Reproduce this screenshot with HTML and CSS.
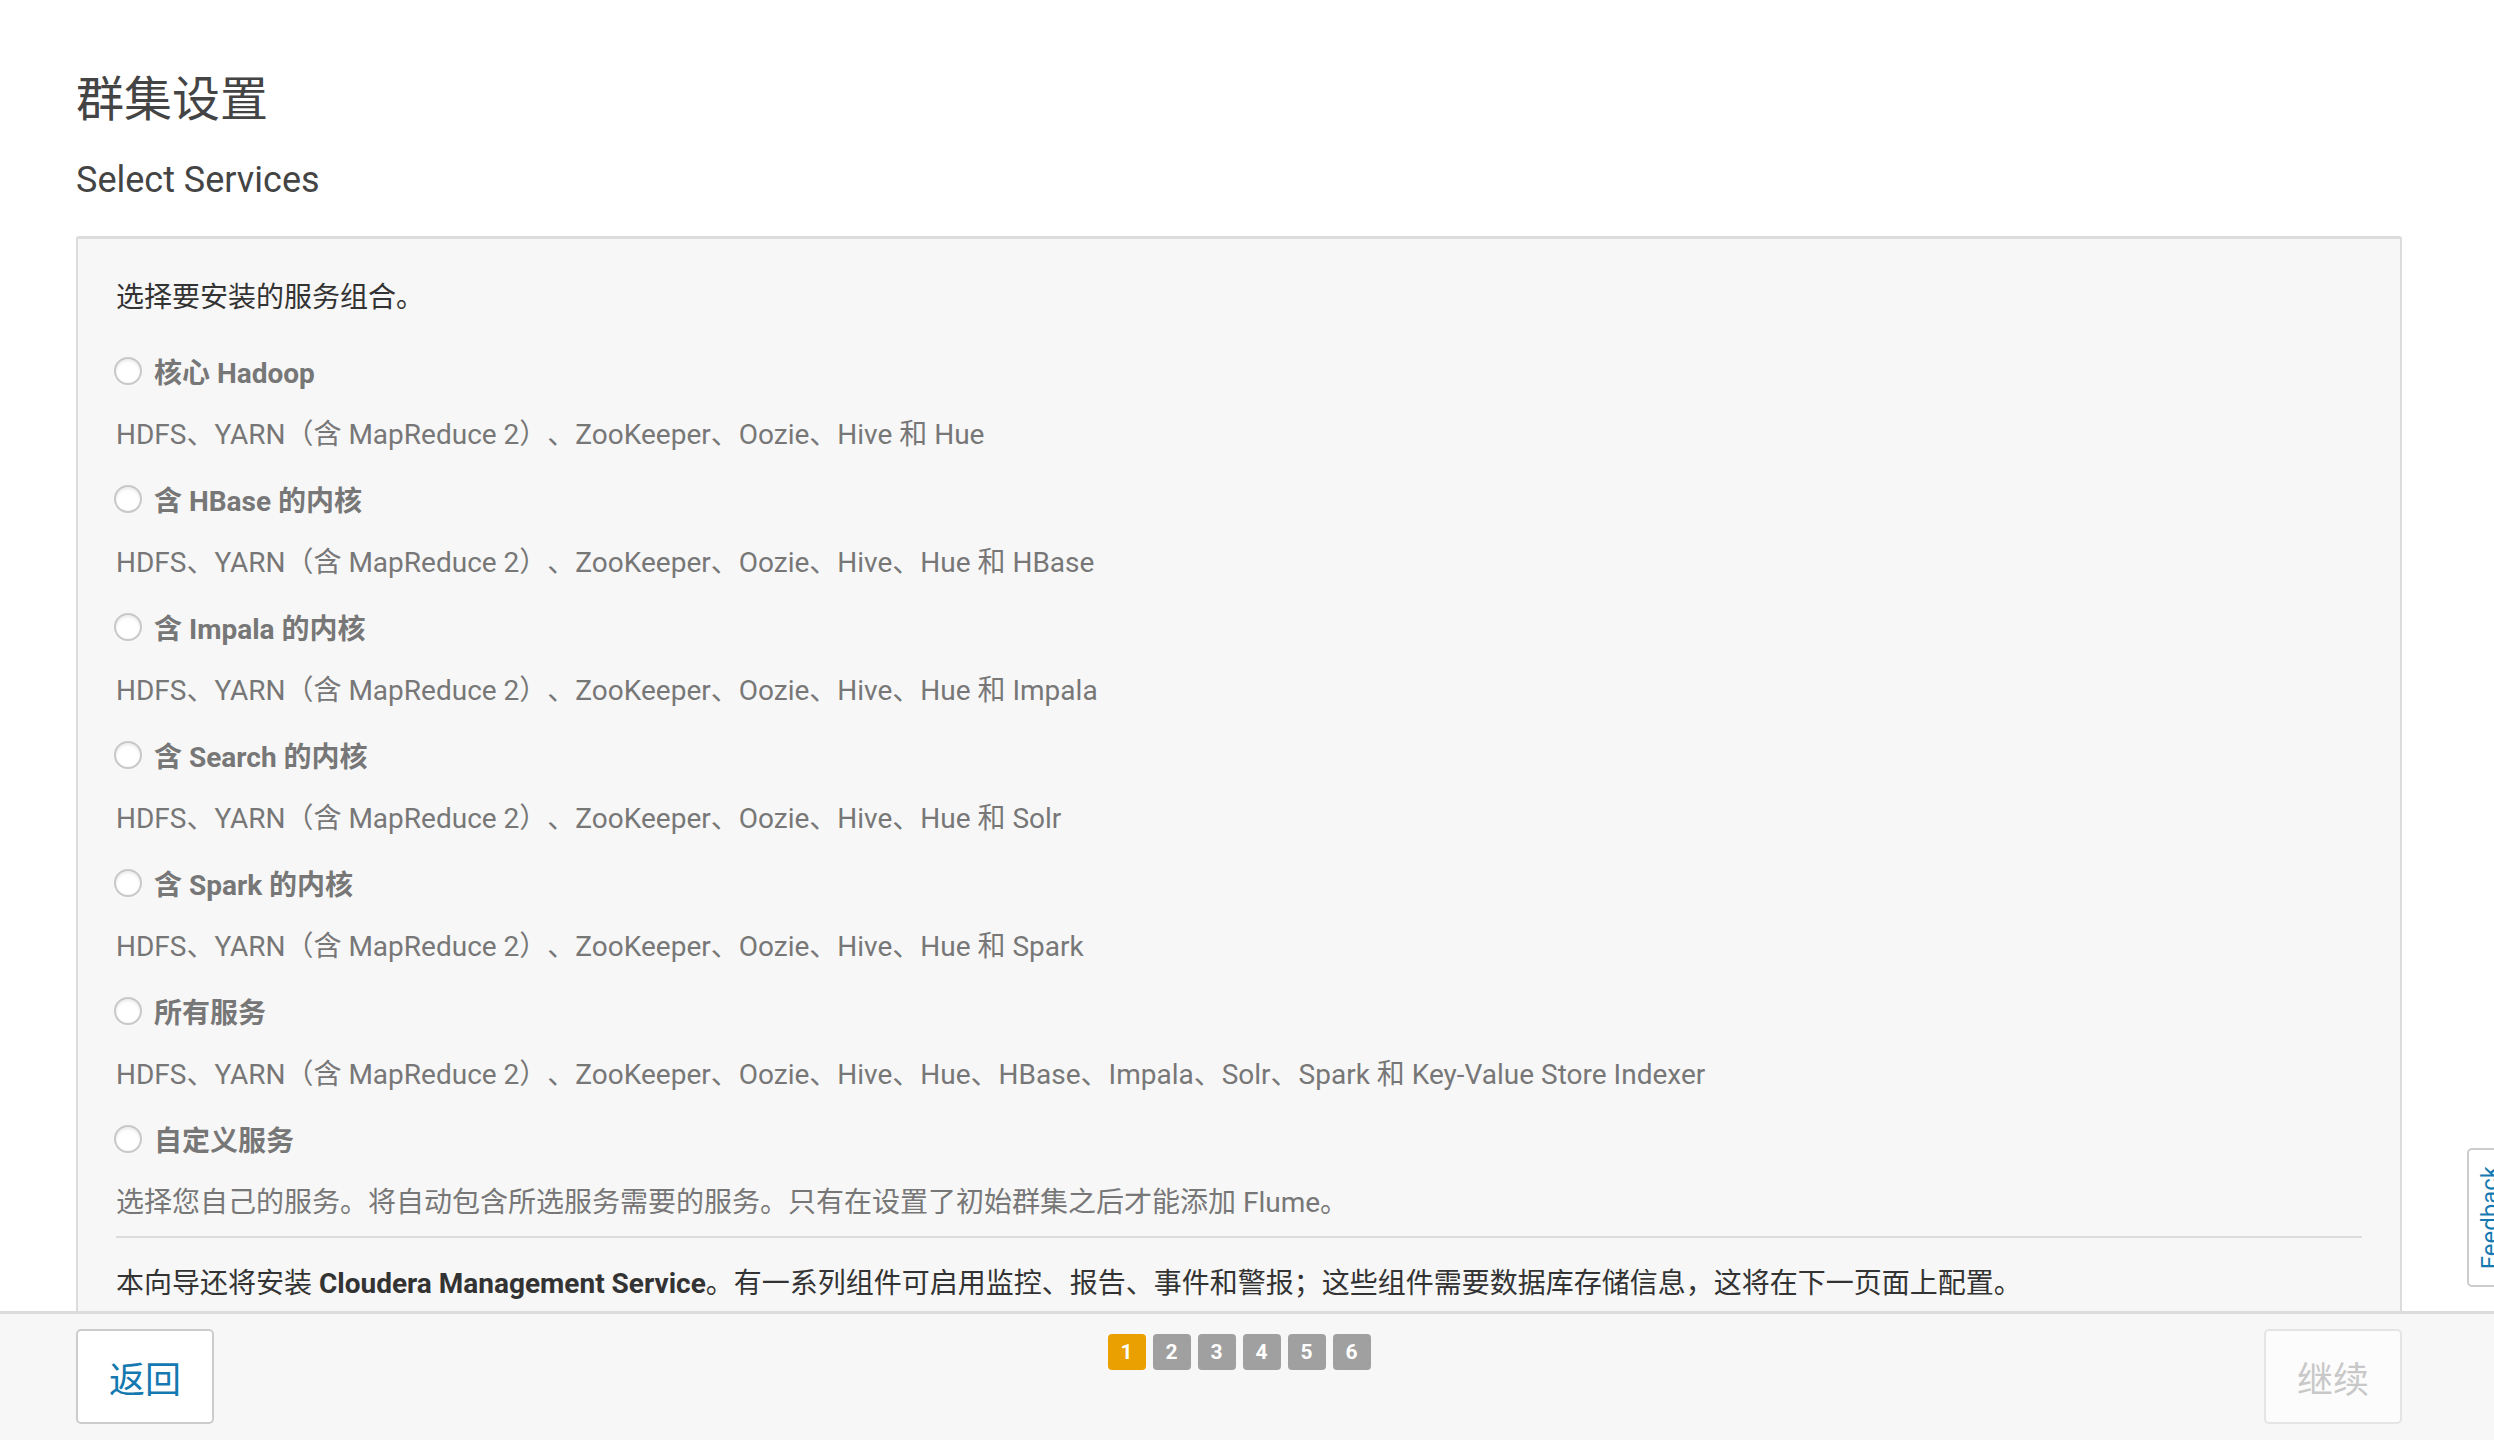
FILE: index.html
```html
<!DOCTYPE html>
<html lang="zh-CN">
<head>
<meta charset="utf-8">
<title>群集设置</title>
<link rel="stylesheet" href="styles.css">
</head>
<body>
<div class="page">
  <h1 class="title">群集设置</h1>
  <h2 class="subtitle">Select Services</h2>
  <div class="card">
    <p class="intro">选择要安装的服务组合。</p>
    <div class="options">
      <div class="option">
        <label class="opt-label"><input type="radio" name="svc" class="radio"><span>核心 Hadoop</span></label>
        <p class="desc">HDFS、YARN（含 MapReduce 2）、ZooKeeper、Oozie、Hive 和 Hue</p>
      </div>
      <div class="option">
        <label class="opt-label"><input type="radio" name="svc" class="radio"><span>含 HBase 的内核</span></label>
        <p class="desc">HDFS、YARN（含 MapReduce 2）、ZooKeeper、Oozie、Hive、Hue 和 HBase</p>
      </div>
      <div class="option">
        <label class="opt-label"><input type="radio" name="svc" class="radio"><span>含 Impala 的内核</span></label>
        <p class="desc">HDFS、YARN（含 MapReduce 2）、ZooKeeper、Oozie、Hive、Hue 和 Impala</p>
      </div>
      <div class="option">
        <label class="opt-label"><input type="radio" name="svc" class="radio"><span>含 Search 的内核</span></label>
        <p class="desc">HDFS、YARN（含 MapReduce 2）、ZooKeeper、Oozie、Hive、Hue 和 Solr</p>
      </div>
      <div class="option">
        <label class="opt-label"><input type="radio" name="svc" class="radio"><span>含 Spark 的内核</span></label>
        <p class="desc">HDFS、YARN（含 MapReduce 2）、ZooKeeper、Oozie、Hive、Hue 和 Spark</p>
      </div>
      <div class="option">
        <label class="opt-label"><input type="radio" name="svc" class="radio"><span>所有服务</span></label>
        <p class="desc">HDFS、YARN（含 MapReduce 2）、ZooKeeper、Oozie、Hive、Hue、HBase、Impala、Solr、Spark 和 Key-Value Store Indexer</p>
      </div>
      <div class="option">
        <label class="opt-label"><input type="radio" name="svc" class="radio"><span>自定义服务</span></label>
        <p class="desc">选择您自己的服务。将自动包含所选服务需要的服务。只有在设置了初始群集之后才能添加 Flume。</p>
      </div>
    </div>
    <hr class="sep">
    <p class="note">本向导还将安装 <strong>Cloudera Management Service</strong>。有一系列组件可启用监控、报告、事件和警报；这些组件需要数据库存储信息，这将在下一页面上配置。</p>
  </div>
</div>

<div class="footer">
  <button class="btn btn-back">返回</button>
  <div class="pager">
    <span class="step active">1</span>
    <span class="step">2</span>
    <span class="step">3</span>
    <span class="step">4</span>
    <span class="step">5</span>
    <span class="step">6</span>
  </div>
  <button class="btn btn-next" disabled>继续</button>
</div>

<div class="feedback"><span class="feedback-text">Feedback</span></div>
</body>
</html>
```

FILE: styles.css
```css
html, body {
  margin: 0;
  padding: 0;
  overflow: hidden;
  background: #ffffff;
}

body {
  font-family: Roboto, "Noto Sans CJK SC", sans-serif;
  color: #444;
  text-spacing-trim: space-all;
}

.page {
  padding: 0 92px 200px 76px;
}

.title {
  margin: 70px 0 0;
  font-size: 48px;
  line-height: 60px;
  font-weight: 400;
  color: #444;
}

.subtitle {
  margin: 28px 0 0;
  font-size: 36px;
  line-height: 44px;
  font-weight: 400;
  color: #444;
}

.card {
  margin-top: 34px;
  background: #f7f7f7;
  border: 2px solid #dcdcdc;
  border-top-width: 3px;
  border-radius: 3px;
  padding: 39px 38px 60px 38px;
}

.intro {
  margin: 0;
  font-size: 28px;
  line-height: 40px;
  color: #333;
}

.options {
  margin-top: 33px;
  display: flex;
  flex-direction: column;
  gap: 24px;
}

.option {
  display: flex;
  flex-direction: column;
  gap: 24px;
}

.opt-label {
  display: flex;
  align-items: center;
  height: 40px;
  font-size: 28px;
  font-weight: 700;
  color: #777;
}

.radio {
  appearance: none;
  -webkit-appearance: none;
  margin: 0 12px 0 -2px;
  width: 28px;
  height: 28px;
  border-radius: 50%;
  border: 2px solid #c8c8c8;
  background: #ffffff;
  box-shadow: inset 0 2px 3px rgba(0, 0, 0, 0.08);
  flex: none;
}

.desc {
  margin: 0;
  font-size: 28px;
  line-height: 40px;
  color: #777;
}

.sep {
  margin: 13px 0 0;
  border: 0;
  border-top: 2px solid #dcdcdc;
  height: 0;
}

.note {
  margin: 26px 0 0;
  font-size: 28px;
  line-height: 40px;
  color: #333;
}

.note strong {
  font-weight: 700;
  color: #333;
}

.footer {
  position: fixed;
  left: 0;
  right: 0;
  bottom: 0;
  height: 129px;
  box-sizing: border-box;
  background: #f7f7f7;
  border-top: 3px solid #dcdcdc;
  padding: 15px 92px 0 76px;
  display: flex;
  justify-content: space-between;
  align-items: flex-start;
}

.btn {
  width: 138px;
  height: 95px;
  box-sizing: border-box;
  border-radius: 5px;
  font-family: Roboto, "Noto Sans CJK SC", sans-serif;
  font-size: 36px;
  padding: 0;
}

.btn-back {
  background: #ffffff;
  border: 2px solid #cccccc;
  color: #1479b0;
}

.btn-next {
  background: #fcfcfc;
  border: 2px solid #e4e4e4;
  color: #c8c8c8;
}

.pager {
  margin-top: 5px;
  display: flex;
  gap: 7px;
}

.step {
  width: 38px;
  height: 36px;
  border-radius: 4px;
  background: #a0a0a0;
  color: #ffffff;
  font-size: 21px;
  font-weight: 700;
  display: flex;
  align-items: center;
  justify-content: center;
}

.step.active {
  background: #e9a000;
}

.feedback {
  position: fixed;
  top: 1148px;
  left: 2467px;
  width: 44px;
  height: 139px;
  box-sizing: border-box;
  background: #ffffff;
  border: 2px solid #cccccc;
  border-radius: 5px;
  display: flex;
  align-items: center;
  justify-content: flex-start;
  padding: 0 0 0 6px;
}

.feedback-text {
  writing-mode: vertical-rl;
  transform: rotate(180deg);
  font-size: 24px;
  line-height: 30px;
  color: #1479b0;
}
```
